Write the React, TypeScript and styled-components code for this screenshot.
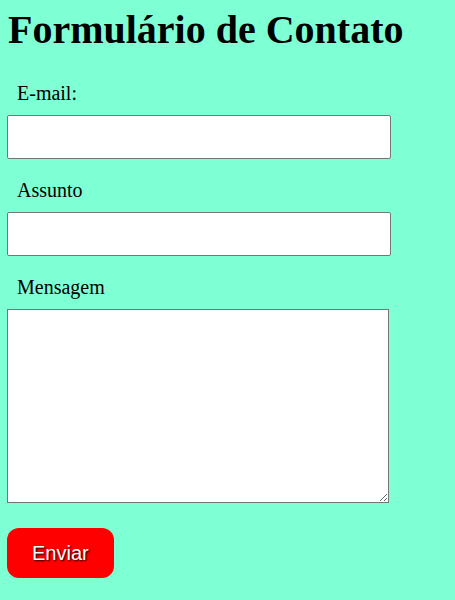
import React from "react";
import styled, { createGlobalStyle } from "styled-components";

const Global = createGlobalStyle`
  html, body {
    margin: 0;
    padding: 0;
    background: #7fffd4;
  }
  body {
    font-family: "Liberation Serif", "Times New Roman", serif;
    font-size: 20px;
    color: #000;
  }
`;

const Page = styled.div`
  padding: 8px 7px 20px 7px;
  display: flex;
  flex-direction: column;
  align-items: flex-start;
`;

const Title = styled.h1`
  margin: 0 0 0 1px;
  font-family: "Liberation Serif", "Times New Roman", serif;
  font-weight: bold;
  font-size: 40px;
  line-height: 44px;
`;

const Form = styled.form`
  display: flex;
  flex-direction: column;
  align-items: flex-start;
`;

const Label = styled.label<{ $first?: boolean }>`
  display: block;
  margin: ${(p) => (p.$first ? "30px" : "20px")} 0 11px 10px;
  font-size: 20px;
  line-height: 22px;
`;

const TextInput = styled.input`
  box-sizing: border-box;
  width: 384px;
  height: 44px;
  margin: 0;
  padding: 2px 4px;
  border: 1px solid #767676;
  border-radius: 2px;
  background: #fff;
  font-family: "Liberation Sans", Arial, sans-serif;
  font-size: 16px;
`;

const MessageArea = styled.textarea`
  box-sizing: border-box;
  width: 382px;
  height: 194px;
  margin: 0;
  padding: 2px;
  border: 1px solid #767676;
  background: #fff;
  font-family: "Liberation Mono", monospace;
  font-size: 13px;
  display: block;
`;

const SubmitButton = styled.button`
  margin-top: 25px;
  padding: 13px 25px;
  border: none;
  border-radius: 12px;
  background: #ff0000;
  color: #fff;
  font-family: "Liberation Sans", Arial, sans-serif;
  font-size: 20px;
  line-height: 24px;
  text-shadow: 1px 1px 2px #000;
  cursor: pointer;
`;

export default function App() {
  return (
    <>
      <Global />
      <Page>
        <Title>Formulário de Contato</Title>
        <Form onSubmit={(e) => e.preventDefault()}>
          <Label $first htmlFor="email">E-mail:</Label>
          <TextInput id="email" type="email" />
          <Label htmlFor="assunto">Assunto</Label>
          <TextInput id="assunto" type="text" />
          <Label htmlFor="mensagem">Mensagem</Label>
          <MessageArea id="mensagem" />
          <SubmitButton type="submit">Enviar</SubmitButton>
        </Form>
      </Page>
    </>
  );
}
